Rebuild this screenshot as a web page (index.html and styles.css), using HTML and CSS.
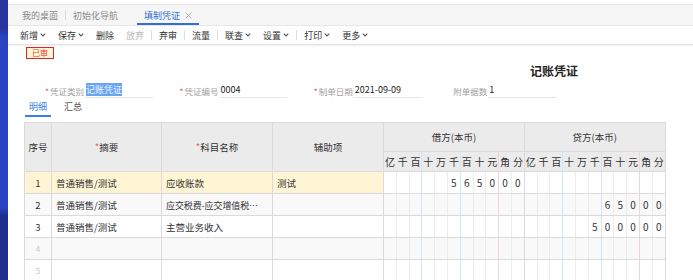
FILE: index.html
```html
<!DOCTYPE html>
<html lang="zh-CN">
<head>
    <meta charset="UTF-8">
    <meta name="viewport" content="width=device-width, initial-scale=1.0">
    <title>填制凭证</title>
    <link rel="stylesheet" href="styles.css">
</head>
<body>
    <div class="sidebar"></div>
    <div class="main">
        <div class="topline"></div>
        <div class="tabs">
            <div class="tab">我的桌面</div>
            <div class="tab-sep"></div>
            <div class="tab">初始化导航</div>
            <div class="tab active">填制凭证
                <svg class="close" viewBox="0 0 7 7"><path d="M0.5 0.5 L6.5 6.5 M6.5 0.5 L0.5 6.5"/></svg>
            </div>
        </div>

        <div class="toolbar">
            <span class="tool">新增<svg class="caret" viewBox="0 0 6 4"><polyline points="0.7,0.7 3,3 5.3,0.7"/></svg></span>
            <span class="tool">保存<svg class="caret" viewBox="0 0 6 4"><polyline points="0.7,0.7 3,3 5.3,0.7"/></svg></span>
            <span class="tool">删除</span>
            <span class="tool disabled">放弃</span>
            <span class="tool-sep"></span>
            <span class="tool">弃审</span>
            <span class="tool-sep"></span>
            <span class="tool">流量</span>
            <span class="tool-sep"></span>
            <span class="tool">联查<svg class="caret" viewBox="0 0 6 4"><polyline points="0.7,0.7 3,3 5.3,0.7"/></svg></span>
            <span class="tool">设置<svg class="caret" viewBox="0 0 6 4"><polyline points="0.7,0.7 3,3 5.3,0.7"/></svg></span>
            <span class="tool-sep"></span>
            <span class="tool">打印<svg class="caret" viewBox="0 0 6 4"><polyline points="0.7,0.7 3,3 5.3,0.7"/></svg></span>
            <span class="tool">更多<svg class="caret" viewBox="0 0 6 4"><polyline points="0.7,0.7 3,3 5.3,0.7"/></svg></span>
        </div>

        <div class="voucher">
            <div class="status"><span class="badge">已审</span></div>
            <div class="title">记账凭证</div>

            <div class="fields">
                <div class="field">
                    <span class="req">*</span><span class="label">凭证类别</span>
                    <span class="input"><span class="sel">记账凭证</span></span>
                </div>
                <div class="field">
                    <span class="req">*</span><span class="label">凭证编号</span>
                    <span class="input">0004</span>
                </div>
                <div class="field">
                    <span class="req">*</span><span class="label">制单日期</span>
                    <span class="input">2021-09-09</span>
                </div>
                <div class="field">
                    <span class="req"></span><span class="label">附单据数</span>
                    <span class="input">1</span>
                </div>
            </div>

            <div class="subtabs">
                <span class="subtab active">明细</span>
                <span class="subtab">汇总</span>
            </div>

            <table class="grid">
                <colgroup>
                    <col class="c-no"><col class="c-text"><col class="c-text2"><col class="c-text2">
                    <col class="d"><col class="d"><col class="d"><col class="d"><col class="d"><col class="d"><col class="d"><col class="d"><col class="d"><col class="d"><col class="d">
                    <col class="d"><col class="d"><col class="d"><col class="d"><col class="d"><col class="d"><col class="d"><col class="d"><col class="d"><col class="d"><col class="d">
                </colgroup>
                <thead>
                    <tr class="head1">
                        <th rowspan="2">序号</th>
                        <th rowspan="2"><span class="star">*</span>摘要</th>
                        <th rowspan="2"><span class="star">*</span>科目名称</th>
                        <th rowspan="2">辅助项</th>
                        <th colspan="11">借方(本币)</th>
                        <th colspan="11">贷方(本币)</th>
                    </tr>
                    <tr class="head2">
                        <th>亿</th><th>千</th><th>百</th><th>十</th><th>万</th><th>千</th><th>百</th><th>十</th><th>元</th><th>角</th><th>分</th>
                        <th>亿</th><th>千</th><th>百</th><th>十</th><th>万</th><th>千</th><th>百</th><th>十</th><th>元</th><th>角</th><th>分</th>
                    </tr>
                </thead>
                <tbody>
                    <tr class="cur">
                        <td class="no">1</td><td class="txt">普通销售/测试</td><td class="txt">应收账款</td><td class="txt">测试</td>
                        <td></td><td></td><td></td><td></td><td></td><td>5</td><td>6</td><td>5</td><td>0</td><td>0</td><td>0</td>
                        <td></td><td></td><td></td><td></td><td></td><td></td><td></td><td></td><td></td><td></td><td></td>
                    </tr>
                    <tr class="alt">
                        <td class="no">2</td><td class="txt">普通销售/测试</td><td class="txt"><span class="short">应交税费-应交增值税…</span></td><td class="txt"></td>
                        <td></td><td></td><td></td><td></td><td></td><td></td><td></td><td></td><td></td><td></td><td></td>
                        <td></td><td></td><td></td><td></td><td></td><td></td><td>6</td><td>5</td><td>0</td><td>0</td><td>0</td>
                    </tr>
                    <tr>
                        <td class="no">3</td><td class="txt">普通销售/测试</td><td class="txt">主营业务收入</td><td class="txt"></td>
                        <td></td><td></td><td></td><td></td><td></td><td></td><td></td><td></td><td></td><td></td><td></td>
                        <td></td><td></td><td></td><td></td><td></td><td>5</td><td>0</td><td>0</td><td>0</td><td>0</td><td>0</td>
                    </tr>
                    <tr class="alt">
                        <td class="no empty">4</td><td></td><td></td><td></td>
                        <td></td><td></td><td></td><td></td><td></td><td></td><td></td><td></td><td></td><td></td><td></td>
                        <td></td><td></td><td></td><td></td><td></td><td></td><td></td><td></td><td></td><td></td><td></td>
                    </tr>
                    <tr>
                        <td class="no empty">5</td><td></td><td></td><td></td>
                        <td></td><td></td><td></td><td></td><td></td><td></td><td></td><td></td><td></td><td></td><td></td>
                        <td></td><td></td><td></td><td></td><td></td><td></td><td></td><td></td><td></td><td></td><td></td>
                    </tr>
                </tbody>
            </table>
        </div>
    </div>
</body>
</html>
```

FILE: styles.css
```css
body {
    margin: 0;
    display: flex;
    height: 280px;
    overflow: hidden;
    font-family: "Noto Sans CJK SC", "Liberation Sans", sans-serif;
    font-size: 9px;
    color: #333;
    background-color: #fff;
}

.sidebar {
    width: 8px;
    flex: none;
    background: linear-gradient(#25349e 0, #25349e 10%, #2b44c4 13%, #2b44c4 74%, #1f2d8e 77%, #1f2d8e 100%);
}

.main {
    flex: 1;
    min-width: 0;
}

.topline {
    height: 4px;
    border-bottom: 1px solid #e3e3e3;
}

/* page tabs */
.tabs {
    height: 20px;
    display: flex;
    padding-left: 7px;
    background-color: #f6f6f6;
    border-bottom: 1px solid #e8e8e8;
    font-size: 9px;
    color: #8a8a8a;
}

.tab {
    display: flex;
    align-items: center;
    padding: 0 7px;
}

.tab-sep {
    width: 1px;
    margin: 5px 0;
    background-color: #dcdcdc;
}

.tab.active {
    margin-left: 12px;
    color: #2f6fd8;
    border-bottom: 2px solid #2f6fd8;
    padding-top: 2px;
}

.close {
    width: 7px;
    height: 7px;
    margin-left: 5px;
    stroke: #b5b5b5;
    stroke-width: 1;
}

/* toolbar */
.toolbar {
    height: 18px;
    display: flex;
    align-items: center;
    padding-left: 6px;
    font-size: 9px;
    color: #333;
    border-bottom: 1px solid #e2e2e2;
    box-shadow: 0 1px 2px rgba(0, 0, 0, 0.06);
}

.tool {
    display: flex;
    align-items: center;
    padding: 0 6px;
}

.tool.disabled {
    color: #b8b8b8;
}

.caret {
    width: 6px;
    height: 4px;
    margin-left: 2px;
    fill: none;
    stroke: #555;
    stroke-width: 1.1;
}

.tool-sep {
    width: 1px;
    height: 10px;
    margin: 0 1px;
    background-color: #dedede;
}

/* voucher */
.voucher {
    padding-left: 16px;
}

.status {
    display: flex;
    align-items: flex-start;
    margin-top: 2px;
    height: 13px;
}

.badge {
    display: flex;
    align-items: center;
    margin-left: 2px;
    padding: 0 5px;
    height: 10px;
    font-size: 8px;
    line-height: 1;
    color: #e53935;
    background-color: #fff6d6;
    border: 1.5px solid #e02424;
}

.title {
    margin-top: 4px;
    padding-left: 506px;
    font-size: 12px;
    line-height: 14px;
    font-weight: bold;
    color: #222;
}

.fields {
    display: flex;
    margin-top: 5px;
    padding-left: 21px;
}

.field {
    width: 134.4px;
    flex: none;
    display: flex;
    align-items: center;
    font-size: 8.5px;
}

.req {
    width: 5px;
    color: #f05a5a;
}

.label {
    width: 35px;
    color: #a0a0a0;
}

.input {
    width: 67px;
    height: 14px;
    padding-left: 1px;
    line-height: 14px;
    font-size: 9px;
    color: #222;
    border-bottom: 1px solid #e6e6e6;
}

.sel {
    background-color: #68a6f3;
    color: #eef5ff;
}

.subtabs {
    display: flex;
    margin: 3px 0 5px 1px;
    font-size: 9px;
}

.subtab {
    padding: 0 4px 2px;
    line-height: 12px;
    color: #555;
    border-bottom: 2px solid transparent;
}

.subtab + .subtab {
    margin-left: 9px;
}

.subtab.active {
    color: #3b7de0;
    border-bottom-color: #3b7de0;
}

/* voucher grid */
.grid {
    width: 641px;
    border-collapse: collapse;
    table-layout: fixed;
    font-size: 9.5px;
}

.c-no { width: 27px; }
.c-text { width: 110px; }
.c-text2 { width: 111px; }
.d { width: 12.8px; }

.grid th,
.grid td {
    padding: 0;
    border: 1px solid #dadada;
    white-space: nowrap;
    overflow: hidden;
    text-align: center;
}

.grid th {
    background-color: #ebebeb;
    font-weight: normal;
    color: #333;
}

.head1 { height: 29px; }
.head2 { height: 20px; }
.head2 th { font-size: 10px; }

.grid tbody tr { height: 22px; }

.star {
    color: #f05a5a;
}

.grid td {
    font-size: 10px;
    color: #333;
}

.grid td.txt {
    text-align: left;
    padding-left: 4px;
    font-size: 9.5px;
}

.short {
    font-size: 9px;
    letter-spacing: -0.1px;
}

.grid td.no {
    font-size: 9.5px;
}

.grid td.empty {
    font-size: 8px;
    color: #c8c8c8;
}

.grid tr.alt td {
    background-color: #f9f9f9;
}

.grid tr.cur td:nth-child(-n+4) {
    background-color: #fff5d4;
}

/* digit column lines */
.head2 th,
.grid tbody td:nth-child(n+5) {
    border-right-color: #ececec;
}

.head2 th:nth-child(3),
.head2 th:nth-child(6),
.head2 th:nth-child(14),
.head2 th:nth-child(17),
.grid tbody td:nth-child(7),
.grid tbody td:nth-child(10),
.grid tbody td:nth-child(18),
.grid tbody td:nth-child(21) {
    border-right-color: #d2e4f6;
}

.head2 th:nth-child(9),
.head2 th:nth-child(20),
.grid tbody td:nth-child(13),
.grid tbody td:nth-child(24) {
    border-right-color: #f2d4d4;
}

.head2 th:nth-child(11),
.head2 th:nth-child(22),
.grid tbody td:nth-child(15),
.grid tbody td:nth-child(26) {
    border-right-color: #dadada;
}
```
